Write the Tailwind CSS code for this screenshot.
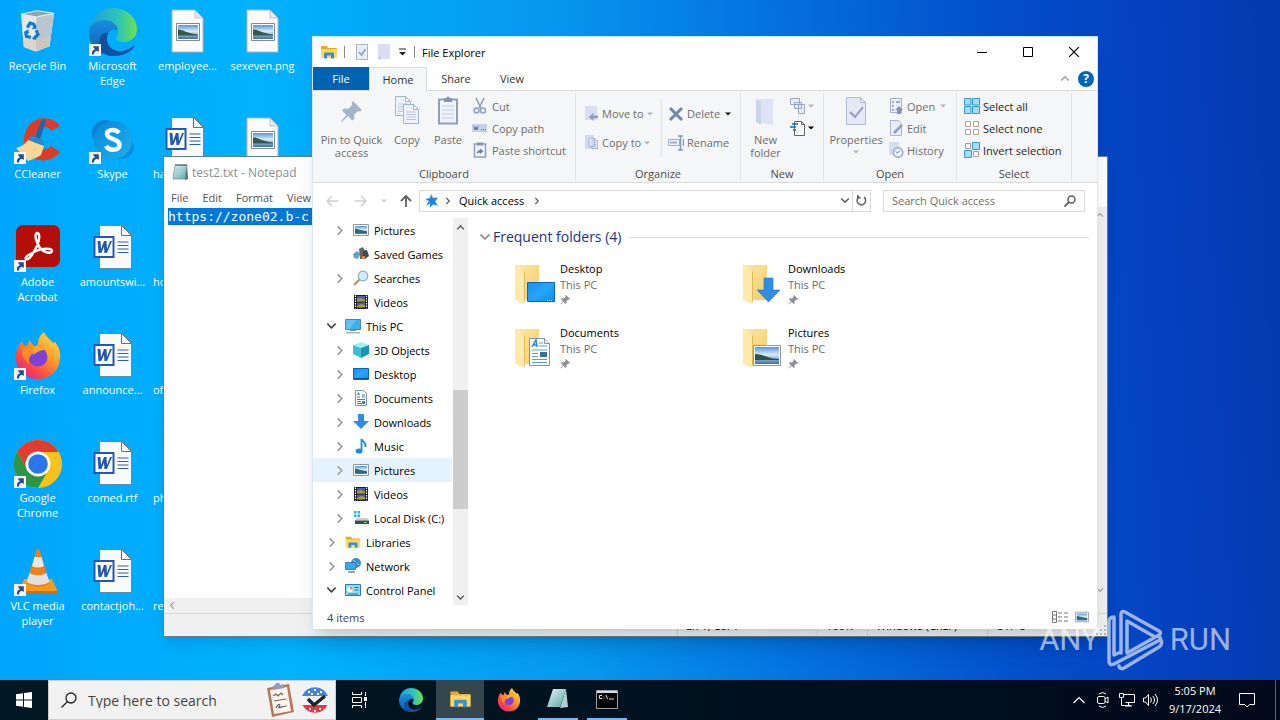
<!DOCTYPE html>
<html lang="en">
<head>
  <meta charset="UTF-8" />
  <meta name="viewport" content="width=device-width, initial-scale=1.0"/>
  <title>Desktop</title>
  <script src="https://cdn.jsdelivr.net/npm/@tailwindcss/browser@4"></script>
</head>
<body class="h-screen overflow-hidden flex flex-col font-['Open_Sans','Noto_Sans',sans-serif] text-[11px] leading-[15px] text-black">

  <!-- Shared icons -->
  <svg class="absolute size-0" aria-hidden="true">
    <defs>
      <linearGradient id="gSky" x1="0" y1="0" x2="0" y2="1"><stop offset="0" stop-color="#5b93dd"/><stop offset=".45" stop-color="#d8ecf8"/><stop offset=".75" stop-color="#7fa9cc"/><stop offset="1" stop-color="#3f6f9c"/></linearGradient>
      <linearGradient id="gFolder" x1="0" y1="0" x2="1" y2="1"><stop offset="0" stop-color="#ffe9a6"/><stop offset="1" stop-color="#f3cb62"/></linearGradient>
      <linearGradient id="gScreen" x1="0" y1="0" x2="1" y2="1"><stop offset="0" stop-color="#1a8fee"/><stop offset=".5" stop-color="#25a5fb"/><stop offset="1" stop-color="#0f8cf0"/></linearGradient>
      <linearGradient id="gEdgeA" x1="0" y1="0" x2="1" y2="0"><stop offset="0" stop-color="#1f9fe0"/><stop offset=".6" stop-color="#2fc4b8"/><stop offset="1" stop-color="#6fe04c"/></linearGradient>
      <linearGradient id="gEdgeB" x1="0" y1="0" x2="0" y2="1"><stop offset="0" stop-color="#1690dc"/><stop offset="1" stop-color="#1058b0"/></linearGradient>
      <linearGradient id="gFox" x1="1" y1="0" x2="0.2" y2="1"><stop offset="0" stop-color="#fff04a"/><stop offset=".45" stop-color="#ff9a2a"/><stop offset=".75" stop-color="#ff4a44"/><stop offset="1" stop-color="#e0218f"/></linearGradient>
      <linearGradient id="gSkype" x1="0" y1="0" x2="1" y2="1"><stop offset="0" stop-color="#0a86d8"/><stop offset="1" stop-color="#1cb2ee"/></linearGradient>
      <linearGradient id="gPad" x1="0" y1="0" x2="1" y2="1"><stop offset="0" stop-color="#e4f5f5"/><stop offset="1" stop-color="#5aa5a8"/></linearGradient>

      <symbol id="shortcut" viewBox="0 0 12 12"><path d="M0 0h12v12H0z" fill="#f4f6fa"/><path d="M3 10.500c-.3-3 .7-4.600 3-5.200L4.200 3.300V2.300H9.800V8L8 6.800C6 7.200 5 8.300 5 10.500z" fill="#2b4a86"/></symbol>
      <symbol id="bin" viewBox="-2 -1 54 54">
        <path d="M6 6l18-4 19 3-5 37-16 6-13-5z" fill="#cdd6dd"/>
        <path d="M6 6l17 3 20-4-5 37-15 6-14-5z" fill="#e9eef2" opacity=".8"/>
        <path d="M23 9l20-4-5 37-15 6z" fill="#b3bfc8" opacity=".85"/>
        <path d="M9 33l14 2 16-4-1 11-15 6-14-5z" fill="#d8c6b8" opacity=".6"/>
        <path d="M6 6l18-4 19 3-20 4z" fill="#8fa3b0" stroke="#f2f6f8"/>
        <path d="M13 21l3-5 4 1 2 4M23 24l2 5-4 4M17 32l-5-1-1-5" fill="none" stroke="#1976cf" stroke-width="3.600"/>
        <path d="M21 18l3 4-6 1zM22 29l-4 5 5 1zM9 26l5-3 1 5z" fill="#1976cf"/>
      </symbol>
      <symbol id="edge" viewBox="0 0 48 48">
        <path d="M1 22C2 9 12 0 24 0c13 0 24 9 24 21 0 8-6 13-13 13-5 0-8-2-8-4 0-1 2-2 2-6 0-6-6-11-13-11C9 13 3 17 1 22z" fill="url(#gEdgeA)"/>
        <path d="M0 25c0-8 7-13 15-13 7 0 13 4 14 10-5-2-11 1-11 9 0 9 8 15 14 16-17 4-32-7-32-22z" fill="url(#gEdgeB)"/>
        <path d="M19 25c-4 10 3 18 12 18 6 0 11-3 13-5 1-1 2 0 1 1-4 6-12 9-21 9-8 0-14-6-14-14 0-5 4-10 9-9z" fill="#124f9e"/>
      </symbol>
      <symbol id="png" viewBox="0 -1 34 48">
        <path d="M1 1h23l8 8v34H1z" fill="#fbfbfb" stroke="#b5b5b5"/><path d="M24 1v8h8z" fill="#e6eaee" stroke="#a9b2b8" stroke-width=".7"/>
        <path d="M5.500 14.500h23v17h-23z" fill="#fff" stroke="#7d8a97"/><path d="M7 16h20v14H7z" fill="url(#gSky)"/><path d="M7 20.500c5 0 9 4 20 5v1H7z" fill="#34584a"/>
      </symbol>
      <symbol id="word" viewBox="0 -1 39 48">
        <path d="M6 .5h22l10 10v33H6z" fill="#fafafa" stroke="#4e7a96" stroke-width=".8"/><path d="M28 .5v10h10z" fill="#fff" stroke="#8c6a45"/>
        <path d="M24 17h11M24 20.500h11M24 24h11M24 27.500h11" stroke="#2a5eb4" stroke-width="1.200"/>
        <path d="M0 11h21v22H0z" fill="#2458b0"/><path d="M2 13h17v18H2z" fill="#fff"/>
        <path d="M4 16h3l.5 8 3-8h2.500l.5 8 3-8h2l-5 12h-2.500l-.6-6-2.600 6H5z" fill="#2458b0"/>
      </symbol>
      <symbol id="ccleaner" viewBox="0 0 48 48">
        <path d="M46 10C40 1 25-1 16 8 7 18 8 36 19 42c9 5 21 2 27-6l-9-6c-5 5-13 4-15-2-3-7 1-16 8-17 3 0 6 1 7 4z" fill="#dd3b26"/>
        <path d="M28 3l4 2-6 18-5-2z" fill="#2365a4"/><path d="M17 19l12 5 1 6-16-4z" fill="#2d86cc"/>
        <path d="M14 24l16 6-3 9c-3 2-7 4-13 6L2 32c5-1 9-4 12-8z" fill="#f7d797"/>
      </symbol>
      <symbol id="skype" viewBox="0 0 48 48">
        <circle cx="16" cy="17" r="13" fill="#0a82d2"/><circle cx="33" cy="31" r="12" fill="#0c8ee0"/><circle cx="24" cy="24" r="19" fill="url(#gSkype)"/>
        <path d="M30 17c-3-4-12-4-12 1 0 6 12.500 4 12.500 11 0 6-10.500 6-13.500 1" fill="none" stroke="#fff" stroke-width="4.500"/>
      </symbol>
      <symbol id="adobe" viewBox="0 0 48 48">
        <rect x="2" y="1" width="44" height="42" rx="7" fill="#b40f06"/>
        <path d="M23 9c-3 1-1 9 3 15 4 5 11 6 12 3 0-3-10-3-16 0s-12 6-10 8c3 2 8-7 11-13 3-7 3-13 0-13z" fill="none" stroke="#fff" stroke-width="2.400"/>
      </symbol>
      <symbol id="firefox" viewBox="0 0 48 48">
        <path d="M2 28C1 20 4 14 8 9l2 5 4-1 1-5 5 6c2 0 3 0 4-2 0-5 2-9 6-12 2 5 6 7 9 11l2-1c4 5 6 11 5 17-1 12-10 20-22 20S3 39 2 28z" fill="url(#gFox)"/>
        <circle cx="24" cy="25" r="9.500" fill="#7c42d8"/>
        <path d="M8 16c5-2 11-1 16 2l-6 4c-3 3-4 6-3 10-6-5-8-10-7-16z" fill="#ff8a26"/><path d="M20 14c4 0 8 1 11 4-4 0-9 2-12 5z" fill="#ffa82e"/>
      </symbol>
      <symbol id="chrome" viewBox="0 0 48 48">
        <circle cx="24" cy="24" r="24" fill="#f9c21a"/>
        <path d="M3.200 12a24 24 0 0 0 20.800 36L34.400 30 24 24 13.600 30z" fill="#2a9644"/>
        <path d="M3.200 12A24 24 0 0 1 44.800 12H24L13.600 30z" fill="#e33b2e"/>
        <circle cx="24" cy="24" r="12.500" fill="#fff"/><circle cx="24" cy="24" r="9.800" fill="#2a74ee"/>
      </symbol>
      <symbol id="vlc" viewBox="0 0 48 48">
        <path d="M10 31h28l6 13H4z" fill="#f59a1c"/><path d="M4 43h40v2H4z" fill="#d86c08"/>
        <path d="M22.500 2q1.500-2 3 0l10 33c-4 5-19 5-23 0z" fill="#f0801a"/><path d="M20.500 9h7l2.500 9c-4 2-8 2-12 0z" fill="#e8e8e8"/><path d="M15.500 25c5 3 12 3 17 0l3 9c-6 4-17 4-23 0z" fill="#e0e0e0"/>
      </symbol>
      <symbol id="notepad" viewBox="0 0 16 18"><path d="M3 2h12l-2 14H1z" fill="url(#gPad)" stroke="#6b8a8c" stroke-width=".7"/><path d="M15 2l1 14-3 1z" fill="#4f7376"/><path d="M4 1v2M6 1v2M8 1v2M10 1v2M12 1v2M14 1v2" stroke="#4a5658"/><path d="M4 6h8M3.600 8.500h8M3.300 11h8" stroke="#a9cfd1" stroke-width=".8"/></symbol>
      <symbol id="explorer" viewBox="0 0 18 16"><path d="M1 2h6l1 2h9v10H1z" fill="#e9a825"/><path d="M1 5h16v9H1z" fill="#fbd766"/><path d="M4 14.500V9.500q0-1 1-1h8q1 0 1 1v5h-3v-3H7v3z" fill="#3b8fce"/></symbol>

      <symbol id="chevR" viewBox="0 0 8 12"><path d="M1.500 1.500L6 6l-4.500 4.500" fill="none" stroke="currentColor" stroke-width="1.600"/></symbol>
      <symbol id="chevD" viewBox="0 0 12 8"><path d="M1.500 1.500L6 6l4.500-4.500" fill="none" stroke="currentColor" stroke-width="1.800"/></symbol>
      <symbol id="chevU" viewBox="0 0 12 8"><path d="M1.500 6.500L6 2l4.500 4.500" fill="none" stroke="currentColor" stroke-width="1.800"/></symbol>
      <symbol id="drop" viewBox="0 0 6 4"><path d="M0 .5h6L3 3.500z" fill="currentColor"/></symbol>

      <symbol id="iPictures" viewBox="0 0 16 16"><path d="M.5 2.500h15v11H.5z" fill="#fff" stroke="#8f9aa5"/><path d="M2 4h12v8H2z" fill="url(#gSky)"/><path d="M2 6.500c4 1 7 2 12 3V11H2z" fill="#2f6678"/></symbol>
      <symbol id="iGames" viewBox="0 0 16 16"><path d="M0 8l4-3 3 3-2 5-4-1z" fill="#5ba6c8"/><path d="M6 3l4-2 2 4-1 8H7z" fill="#5d676d"/><path d="M10 5l4-1 2 6-4 3-2-1z" fill="#454b50"/><path d="M9 10h3v3H9z" fill="#d98b4a"/></symbol>
      <symbol id="iSearch" viewBox="0 0 16 16"><path d="M1 15l6-6" stroke="#a88d6d" stroke-width="2"/><circle cx="10" cy="6" r="4.800" fill="#d3ebfa" stroke="#8ba9c0" stroke-width="1.200"/></symbol>
      <symbol id="iVideos" viewBox="0 0 16 16"><path d="M1 1h14v14H1z" fill="#1c1c24"/><path d="M4 2h8v5.500H4z" fill="#4c5fa8"/><path d="M4 8.500h8V14H4z" fill="#4c5fa8"/><path d="M4 5l4-1 4 2v1.500H4zM4 12l4-2 4 1v2H4z" fill="#a89a3c"/><path d="M2.500 1.500v13M13.500 1.500v13" stroke="#fff" stroke-width="1.200" stroke-dasharray="1.500 1"/></symbol>
      <symbol id="iPC" viewBox="0 0 16 16"><path d="M.5 1.500h15v10H.5z" fill="#39b2f0" stroke="#4b86ae"/><path d="M1 2h10L5 11H1z" fill="#77d0fa" opacity=".6"/><path d="M5 12.500h6M1 14.800h14" stroke="#7d8f9c"/></symbol>
      <symbol id="i3D" viewBox="0 0 16 16"><path d="M0 3l8-3 8 3-8 3z" fill="#a6ecf4"/><path d="M0 3l8 3v10l-8-4z" fill="#3cc0d6"/><path d="M16 3L8 6v10l8-4z" fill="#1793b5"/></symbol>
      <symbol id="iDesktop" viewBox="0 0 16 16"><path d="M.5 2.500h15v11H.5z" fill="url(#gScreen)" stroke="#0b62b0"/><path d="M1 12.500h14" stroke="#0d4f96"/></symbol>
      <symbol id="iDocs" viewBox="0 0 16 16"><path d="M2.500.5h8l3 3v12h-11z" fill="#fff" stroke="#7d96a8"/><path d="M4 7h3M9 5h3M9 7h3M4 9.500h8M4 11.500h4M4 13.500h8" stroke="#3b82c4"/><path d="M4 5l1.500-3L7 5M9 11h3v2H9z" fill="#3b82c4"/></symbol>
      <symbol id="iDown" viewBox="0 0 16 16"><path d="M5 0h6v7h5l-8 8-8-8h5z" fill="#2f8ce2"/></symbol>
      <symbol id="iMusic" viewBox="0 0 16 16"><path d="M8.500 13V1c1 3 5 3.500 4 8" fill="none" stroke="#1b8de8" stroke-width="1.800"/><ellipse cx="6" cy="13" rx="3.400" ry="2.600" fill="#1b8de8"/></symbol>
      <symbol id="iDisk" viewBox="0 0 16 16"><path d="M1 1h2.500v2.500H1zM4.500 1H7v2.500H4.500zM1 4.500h2.500V7H1zM4.500 4.500H7V7H4.500z" fill="#21b4e4"/><path d="M4 8h10l2 2.500H2z" fill="#c9cdd0"/><path d="M2 10.500h14V14H2z" fill="#43484c"/><path d="M11 12.500h3" stroke="#6de06a"/></symbol>
      <symbol id="iNetwork" viewBox="0 0 16 16"><circle cx="11" cy="5" r="5" fill="#3d8fc8"/><path d="M8 2l6 5" stroke="#a5d4f0"/><path d="M.5 4.500h11l-1 7H.5z" fill="#35aaf0" stroke="#2c6c9c" stroke-width=".8"/><path d="M3 14h7" stroke="#6c7f8c" stroke-width="1.400"/></symbol>
      <symbol id="iPanel" viewBox="0 0 16 16"><path d="M.5 2.500h15v11H.5z" fill="#8fdcfa" stroke="#2b7ab2"/><circle cx="5" cy="7.500" r="2.800" fill="#fff"/><path d="M5 7.500V4.700A2.800 2.800 0 0 1 7.800 7.500z" fill="#e5902c"/><path d="M9.500 5.500h4M9.500 8h4M3 12h10" stroke="#256ea8" stroke-width="1.200"/></symbol>

      <symbol id="folderBase" viewBox="0 0 42 42"><path d="M2 2h24v35H13z" fill="url(#gFolder)"/><path d="M2 2l9 6v33l-9-4z" fill="#ffe9ad"/><path d="M11 8v33l1-4V9z" fill="#e3b85a"/></symbol>
      <symbol id="pin" viewBox="0 0 12 12"><path d="M6.500 1l4.500 4.500-1 .8-1-.3-2 2 .2 2-1.200.8L4 8.500.8 11.500l-.4-.3L3.200 8 1 5.800 2 4.700l2.200.2 2-2L5.800 2z" fill="currentColor"/></symbol>
      <symbol id="page" viewBox="0 0 16 20"><path d="M.5.5h10l5 5v14H.5z" fill="#eef2fa" stroke="#a3b4cf"/><path d="M10.500.5v5h5" fill="none" stroke="#a3b4cf"/><path d="M3 8h10M3 10.500h10M3 13h10M3 15.500h10" stroke="#b9c8e0"/></symbol>
    </defs>
  </svg>

  <!-- Desktop -->
  <main class="relative flex-1 min-h-0 overflow-hidden bg-[linear-gradient(87deg,#00a6fc_0%,#00b2ff_22%,#0698f0_44%,#0474e0_60%,#034fcc_78%,#0443c2_88%,#0438ae_100%)]">

    <div class="grid grid-flow-col grid-rows-[repeat(6,108px)] auto-cols-[75px] w-max text-white text-center [text-shadow:0_1px_1px_#0060a0]">
      <button class="flex flex-col items-center justify-start pt-2 gap-[2px]"><svg class="size-12"><use href="#bin"/></svg>Recycle Bin</button>
      <button class="flex flex-col items-center justify-start pt-2 gap-[2px]"><span class="relative"><svg class="size-12"><use href="#ccleaner"/></svg><svg class="absolute left-0 bottom-0 size-3"><use href="#shortcut"/></svg></span>CCleaner</button>
      <button class="flex flex-col items-center justify-start pt-2 gap-[2px]"><span class="relative"><svg class="size-12"><use href="#adobe"/></svg><svg class="absolute left-0 bottom-0 size-3"><use href="#shortcut"/></svg></span>Adobe<br>Acrobat</button>
      <button class="flex flex-col items-center justify-start pt-2 gap-[2px]"><span class="relative"><svg class="size-12"><use href="#firefox"/></svg><svg class="absolute left-0 bottom-0 size-3"><use href="#shortcut"/></svg></span>Firefox</button>
      <button class="flex flex-col items-center justify-start pt-2 gap-[2px]"><span class="relative"><svg class="size-12"><use href="#chrome"/></svg><svg class="absolute left-0 bottom-0 size-3"><use href="#shortcut"/></svg></span>Google<br>Chrome</button>
      <button class="flex flex-col items-center justify-start pt-2 gap-[2px]"><span class="relative"><svg class="size-12"><use href="#vlc"/></svg><svg class="absolute left-0 bottom-0 size-3"><use href="#shortcut"/></svg></span>VLC media<br>player</button>

      <button class="flex flex-col items-center justify-start pt-2 gap-[2px]"><span class="relative"><svg class="size-12"><use href="#edge"/></svg><svg class="absolute left-0 bottom-0 size-3"><use href="#shortcut"/></svg></span>Microsoft<br>Edge</button>
      <button class="flex flex-col items-center justify-start pt-2 gap-[2px]"><span class="relative"><svg class="size-12"><use href="#skype"/></svg><svg class="absolute left-0 bottom-0 size-3"><use href="#shortcut"/></svg></span>Skype</button>
      <button class="flex flex-col items-center justify-start pt-2 gap-[2px]"><svg class="h-12 w-[44px]"><use href="#word"/></svg>amountswi...</button>
      <button class="flex flex-col items-center justify-start pt-2 gap-[2px]"><svg class="h-12 w-[44px]"><use href="#word"/></svg>announce...</button>
      <button class="flex flex-col items-center justify-start pt-2 gap-[2px]"><svg class="h-12 w-[44px]"><use href="#word"/></svg>comed.rtf</button>
      <button class="flex flex-col items-center justify-start pt-2 gap-[2px]"><svg class="h-12 w-[44px]"><use href="#word"/></svg>contactjoh...</button>

      <button class="flex flex-col items-center justify-start pt-2 gap-[2px]"><svg class="h-12 w-[34px]"><use href="#png"/></svg>employee...</button>
      <button class="flex flex-col items-start pt-2 pl-[3px] gap-[2px]"><svg class="h-12 w-[64px]"><use href="#word"/></svg>ha</button>
      <button class="flex flex-col items-start pt-2 pl-[3px] gap-[2px]"><svg class="h-12 w-[64px]"><use href="#word"/></svg>ho</button>
      <button class="flex flex-col items-start pt-2 pl-[3px] gap-[2px]"><svg class="h-12 w-[64px]"><use href="#word"/></svg>of</button>
      <button class="flex flex-col items-start pt-2 pl-[3px] gap-[2px]"><svg class="h-12 w-[64px]"><use href="#word"/></svg>ph</button>
      <button class="flex flex-col items-start pt-2 pl-[3px] gap-[2px]"><svg class="h-12 w-[64px]"><use href="#word"/></svg>re</button>

      <button class="flex flex-col items-center justify-start pt-2 gap-[2px]"><svg class="h-12 w-[34px]"><use href="#png"/></svg>sexeven.png</button>
      <button class="flex flex-col items-center justify-start pt-2 gap-[2px]" aria-label="Image"><svg class="h-12 w-[34px]"><use href="#png"/></svg></button>
    </div>

    <!-- Notepad -->
    <section class="absolute left-[163px] right-[172px] top-[156px] bottom-[43px] flex flex-col bg-white border border-[#5f7f95] shadow-lg">
      <header class="h-[30px] shrink-0 flex items-center gap-1 pl-2 text-[12px] text-[#8f8f8f]">
        <svg class="w-4 h-[18px]"><use href="#notepad"/></svg>
        <span>test2.txt - Notepad</span>
      </header>
      <nav class="h-5 shrink-0 flex items-center gap-[14px] pl-[7px] text-[#555]">
        <button>File</button><button>Edit</button><button>Format</button><button>View</button>
      </nav>
      <div class="flex-1 min-h-0 flex">
        <div class="flex-1 pl-1">
          <p class="mt-px h-[17px] bg-[#0078d7] text-white font-['DejaVu_Sans_Mono','Liberation_Mono',monospace] text-[13px] leading-[17px] overflow-hidden">https://zone02.b-c</p>
        </div>
        <div class="w-[15px] bg-[#f0f0f0] flex flex-col justify-between items-center py-1 text-[#a0a0a0]">
          <svg class="w-2 h-2"><use href="#chevU"/></svg><svg class="w-2 h-2"><use href="#chevD"/></svg>
        </div>
      </div>
      <div class="h-4 shrink-0 bg-[#f0f0f0] border-b border-[#d7d7d7] flex items-center pl-1 text-[#a0a0a0]"><svg class="w-2 h-[9px] rotate-180"><use href="#chevR"/></svg></div>
      <footer class="h-[22px] shrink-0 bg-[#f0f0f0] flex justify-end items-stretch leading-[23px]">
        <span class="w-[140px] border-l border-[#d7d7d7] pl-2">Ln 1, Col 1</span>
        <span class="w-[50px] border-l border-[#d7d7d7] pl-2">100%</span>
        <span class="w-[120px] border-l border-[#d7d7d7] pl-2">Windows (CRLF)</span>
        <span class="w-[120px] border-l border-[#d7d7d7] pl-2 flex justify-between">UTF-8
          <svg class="size-3 self-end" viewBox="0 0 12 12"><path d="M9 1h2v2H9zM5 5h2v2H5zM9 5h2v2H9zM1 9h2v2H1zM5 9h2v2H5zM9 9h2v2H9z" fill="#b8b8b8"/></svg>
        </span>
      </footer>
    </section>

    <!-- File Explorer -->
    <section class="absolute left-[312px] right-[182px] top-[36px] bottom-[51px] flex flex-col bg-white border-x border-t border-x-[#d5e8f5] border-t-[#c4eefa] shadow-xl">
      <header class="h-[30px] shrink-0 flex items-center pl-[7px]">
        <svg class="w-[18px] h-4"><use href="#explorer"/></svg>
        <span class="w-px h-3 bg-[#8b8b8b] ml-[6px]"></span>
        <button class="ml-[11px]" aria-label="Properties"><svg class="w-3 h-4" viewBox="0 0 12 16"><path d="M.5.5h11v15H.5z" fill="#e8eef8" stroke="#a9b7d0"/><path d="M3 8l2.500 3L9.500 5" fill="none" stroke="#8b9cc0" stroke-width="1.500"/></svg></button>
        <button class="ml-[10px]" aria-label="New folder"><svg class="w-3 h-4" viewBox="0 0 12 16"><path d="M0 0h12v15H0z" fill="#dcdff3"/><path d="M0 12l3 1v3l-3-1z" fill="#c5cbea"/></svg></button>
        <button class="ml-[9px]" aria-label="Customize toolbar"><svg class="w-[7px] h-2" viewBox="0 0 7 8"><path d="M0 1h7" stroke="#222"/><path d="M0 4h7L3.500 7.500z" fill="#222"/></svg></button>
        <span class="w-px h-3 bg-[#8b8b8b] ml-[8px] mr-[7px]"></span>
        <h1>File Explorer</h1>
        <div class="ml-auto flex">
          <button class="w-[46px] h-[30px] grid place-items-center" aria-label="Minimize"><svg class="size-[10px]" viewBox="0 0 10 10"><path d="M0 5.500h10" stroke="#000"/></svg></button>
          <button class="w-[46px] h-[30px] grid place-items-center" aria-label="Maximize"><svg class="size-[10px]" viewBox="0 0 10 10"><path d="M.5.5h9v9h-9z" fill="none" stroke="#000"/></svg></button>
          <button class="w-[46px] h-[30px] grid place-items-center" aria-label="Close"><svg class="size-[10px]" viewBox="0 0 10 10"><path d="M0 0l10 10M10 0L0 10" stroke="#000" stroke-width="1.200"/></svg></button>
        </div>
      </header>

      <nav class="h-6 shrink-0 flex text-[#333] border-b border-[#dadbdc]">
        <button class="w-14 bg-[#0063b1] text-white">File</button>
        <button class="w-[58px] h-6 bg-[#f5f6f7] border-x border-t border-[#dadbdc]">Home</button>
        <button class="w-[58px]">Share</button>
        <button class="w-[54px]">View</button>
        <div class="ml-auto flex items-center gap-2 pr-[3px]">
          <button class="text-[#a0a0a0]" aria-label="Collapse ribbon"><svg class="w-[10px] h-[7px]"><use href="#chevU"/></svg></button>
          <button class="size-4 rounded-full bg-[#0067b8] text-white font-bold text-[12px] leading-4" aria-label="Help">?</button>
        </div>
      </nav>

      <!-- Ribbon -->
      <div class="h-[92px] shrink-0 flex bg-[#f5f6f7] border-b border-[#dadbdc] text-[#6d6d6d] leading-[13px]">
        <div class="w-[263px] my-[2px] border-r border-[#e2e3e4] flex flex-col">
          <div class="flex-1 min-h-0 flex items-start pt-[2px]">
            <button class="w-[77px] flex flex-col items-center"><svg class="size-8 p-1 text-[#a4b5c8]"><use href="#pin"/></svg><span class="mt-[6px]">Pin to Quick<br>access</span></button>
            <button class="w-[34px] flex flex-col items-center"><svg class="size-8" viewBox="0 0 32 32"><use href="#page" x="4" y="1" width="16" height="20"/><use href="#page" x="12" y="9" width="16" height="20"/></svg><span class="mt-[6px]">Copy</span></button>
            <button class="w-[48px] flex flex-col items-center"><svg class="size-8" viewBox="0 0 32 32"><path d="M7 4.500h18v24H7z" fill="#f0f4fb" stroke="#8e9fc0" stroke-width="2"/><path d="M12 3h2q2-3 4 0h2v4h-8z" fill="#8795ae"/><path d="M10 11h12M10 15h12M10 19h12M10 23h12" stroke="#bccae0"/></svg><span class="mt-[6px]">Paste</span></button>
            <div class="flex flex-col">
              <button class="h-[22px] flex items-center gap-1"><svg class="size-4" viewBox="0 0 16 16"><path d="M4 0l5 10M12 0L7 10" stroke="#8b9cb5" stroke-width="1.500"/><circle cx="4.500" cy="12.500" r="2.500" fill="none" stroke="#8fa2cc" stroke-width="1.500"/><circle cx="11" cy="12.500" r="2.500" fill="none" stroke="#8fa2cc" stroke-width="1.500"/></svg>Cut</button>
              <button class="h-[22px] flex items-center gap-1"><svg class="size-4" viewBox="0 0 16 16"><path d="M0 4h15v8H0z" fill="#c6d0ea"/><path d="M2 6l1 4 1-3 1 3 1-4M9 9.500h1M11 9.500h1M13 9.500h1" fill="none" stroke="#5c74a8"/></svg>Copy path</button>
              <button class="h-[22px] flex items-center gap-1"><svg class="size-4" viewBox="0 0 16 16"><path d="M2.500 2h11v13h-11z" fill="#f0f4fb" stroke="#8e9fc0" stroke-width="1.500"/><path d="M5 .5h6v3H5z" fill="#8795ae"/><path d="M5 12c0-3 1-4 3-4V6.500l3.500 2.800L8 12v-1.500c-1 0-2 .5-3 1.500z" fill="#6c80aa"/></svg>Paste shortcut</button>
            </div>
          </div>
          <p class="text-center text-[#4a4a4a]">Clipboard</p>
        </div>

        <div class="w-[165px] my-[2px] border-r border-[#e2e3e4] flex flex-col">
          <div class="flex-1 min-h-0 flex items-start pt-[6px] pl-2">
            <div class="h-[58px] w-[78px] border-r border-[#e2e3e4] flex flex-col">
              <button class="h-[29px] flex items-center gap-[3px]"><svg class="size-[15px]" viewBox="0 0 16 16"><path d="M1 0h13v15H1z" fill="#d8dff1"/><path d="M15 10h-5V7l-5 5 5 4v-3h5z" fill="#8f9fc0"/></svg>Move to<svg class="w-[6px] h-1 text-[#b3b3b3]"><use href="#drop"/></svg></button>
              <button class="h-[29px] flex items-center gap-[3px]"><svg class="size-[15px]" viewBox="0 0 16 16"><path d="M1 0h10v15H1z" fill="#cfdcf0"/><path d="M5.500 3.500h6v9h-6zM8.500 5.500h6v9h-6z" fill="#f4f7fc" stroke="#98abcf"/><path d="M10 8h3M10 10h3M10 12h3" stroke="#98abcf"/></svg>Copy to<svg class="w-[6px] h-1 text-[#b3b3b3]"><use href="#drop"/></svg></button>
            </div>
            <div class="flex flex-col pl-[6px]">
              <button class="h-[29px] flex items-center gap-[3px]"><svg class="size-4" viewBox="0 0 16 16"><path d="M2 2l12 12M14 2L2 14" stroke="#7287a5" stroke-width="3"/></svg>Delete<svg class="w-[6px] h-1 ml-[2px] text-black"><use href="#drop"/></svg></button>
              <button class="h-[29px] flex items-center gap-[3px]"><svg class="size-4" viewBox="0 0 16 16"><path d="M.5 4.500h11v6H.5z" fill="#eef2fa" stroke="#9aaed0"/><path d="M2 6.500h7v2H2z" fill="#9aaed0"/><path d="M10 1h5M12.500 1v14M10 15h5M15.500 4v7" stroke="#8398bd" stroke-width="1.500"/></svg>Rename</button>
            </div>
          </div>
          <p class="text-center text-[#4a4a4a]">Organize</p>
        </div>

        <div class="w-[83px] my-[2px] border-r border-[#e2e3e4] flex flex-col">
          <div class="flex-1 min-h-0 flex items-start pt-[2px]">
            <button class="w-[49px] flex flex-col items-center"><svg class="size-8" viewBox="0 0 32 32"><path d="M6 4h17v26l-13-2z" fill="#dce3f3"/><path d="M6 4l5 4v22l-5-3z" fill="#c9d3ec"/></svg><span class="mt-[6px]">New<br>folder</span></button>
            <div class="flex flex-col">
              <button class="h-[22px] flex items-center gap-[2px]" aria-label="New item"><svg class="size-4" viewBox="0 0 16 16"><path d="M.5.5h9v6h-9zM4.500 4.500h7v6h-7zM8.500 6.500h6v9h-6z" fill="#e8edf7" stroke="#95a6c6"/></svg><svg class="w-[6px] h-1 text-[#b3b3b3]"><use href="#drop"/></svg></button>
              <button class="h-[22px] flex items-center gap-[2px]" aria-label="Easy access"><svg class="size-4" viewBox="0 0 16 16"><path d="M4.500 1.500h7l3 3v11h-10z" fill="#fff" stroke="#666"/><path d="M11.500 1.500v3h3" fill="none" stroke="#666"/><path d="M2 4h6M0 7h6M3 10h3" stroke="#1767b5" stroke-width="1.500"/></svg><svg class="w-[6px] h-1 text-black"><use href="#drop"/></svg></button>
            </div>
          </div>
          <p class="text-center text-[#4a4a4a]">New</p>
        </div>

        <div class="w-[133px] my-[2px] border-r border-[#e2e3e4] flex flex-col">
          <div class="flex-1 min-h-0 flex items-start pt-[2px]">
            <button class="w-[64px] flex flex-col items-center"><svg class="size-8" viewBox="0 0 32 32"><path d="M6.500 2.500h14l5 5v22h-19z" fill="#e4e9f6" stroke="#b0bcd6"/><path d="M20.500 2.500v5h5" fill="none" stroke="#b0bcd6"/><path d="M10 17l5 5 8-10" fill="none" stroke="#8d9ec2" stroke-width="2"/></svg><span class="mt-[6px]">Properties</span><svg class="w-[6px] h-1 mt-1 text-[#b3b3b3]"><use href="#drop"/></svg></button>
            <div class="flex flex-col">
              <button class="h-[22px] flex items-center gap-[3px]"><svg class="size-4" viewBox="0 0 16 16"><path d="M2.500.5h11v14h-11z" fill="#eef2fa" stroke="#a0aecb"/><path d="M4 3h2v2H4zM4 7h2v2H4zM4 11h2v2H4zM8 3h4v2H8z" fill="#9aaad0"/><path d="M9 16v-4H7l4-4 4 4h-2v4z" fill="#8094bc"/></svg>Open<svg class="w-[6px] h-1 ml-[2px] text-[#b3b3b3]"><use href="#drop"/></svg></button>
              <button class="h-[22px] flex items-center gap-[3px]"><svg class="size-4" viewBox="0 0 16 16"><path d="M2.500.5h8l3 3v12h-11z" fill="#e8edf8" stroke="#a8b5d0"/><path d="M6 13l8-8" stroke="#8ea0c4" stroke-width="2.500"/></svg>Edit</button>
              <button class="h-[22px] flex items-center gap-[3px]"><svg class="size-4" viewBox="0 0 16 16"><path d="M1 0h10v13H1z" fill="#d5def0"/><circle cx="10" cy="10.500" r="4.700" fill="#eef2fa" stroke="#93a5c8" stroke-width="1.500"/><path d="M7.500 9.500l2 1.500L12 8.500" fill="none" stroke="#6c80aa"/></svg>History</button>
            </div>
          </div>
          <p class="text-center text-[#4a4a4a]">Open</p>
        </div>

        <div class="w-[115px] my-[2px] border-r border-[#e2e3e4] flex flex-col">
          <div class="flex-1 min-h-0 flex flex-col pt-[2px] pl-[7px] text-[#1e1e1e]">
            <button class="h-[22px] flex items-center gap-[3px]"><svg class="size-4" viewBox="0 0 16 16"><path d="M.5.5h6.500v6.500H.5zM8.500.5h7v6.500h-7zM.5 8.500h6.500v7H.5zM8.500 8.500h7v7h-7z" fill="#a5dcfb" stroke="#3596d6"/></svg>Select all</button>
            <button class="h-[22px] flex items-center gap-[3px]"><svg class="size-4" viewBox="0 0 16 16"><path d="M1.500 1.500h5v5h-5zM9.500 1.500h5v5h-5zM1.500 9.500h5v5h-5zM9.500 9.500h5v5h-5z" fill="#fff" stroke="#b49f94"/></svg>Select none</button>
            <button class="h-[22px] flex items-center gap-[3px]"><svg class="size-4" viewBox="0 0 16 16"><path d="M1.500 1.500h5v5h-5zM9.500 9.500h5v5h-5z" fill="#fff" stroke="#a79a94"/><path d="M8.500.5h7v7h-7zM.5 8.500h7v7h-7z" fill="#a5dcfb" stroke="#3596d6"/></svg>Invert selection</button>
          </div>
          <p class="text-center text-[#4a4a4a]">Select</p>
        </div>
      </div>

      <!-- Address bar -->
      <div class="h-[35px] shrink-0 flex items-center pr-3">
        <div class="w-[106px] flex items-center pl-[13px]">
          <button aria-label="Back"><svg class="size-3" viewBox="0 0 12 12"><path d="M12 6H1M6 1L1 6l5 5" fill="none" stroke="#d0d0d0" stroke-width="1.500"/></svg></button>
          <button class="ml-[17px]" aria-label="Forward"><svg class="size-3" viewBox="0 0 12 12"><path d="M0 6h11M6 1l5 5-5 5" fill="none" stroke="#d0d0d0" stroke-width="1.500"/></svg></button>
          <button class="ml-[14px] text-[#d0d0d0]" aria-label="Recent"><svg class="w-[6px] h-1"><use href="#drop"/></svg></button>
          <button class="ml-[13px]" aria-label="Up"><svg class="size-3" viewBox="0 0 12 12"><path d="M6 12V1M1 6l5-5 5 5" fill="none" stroke="#606060" stroke-width="1.800"/></svg></button>
        </div>
        <div class="flex-1 h-[22px] flex items-center border border-[#d9d9d9] pl-[5px]">
          <svg class="size-[14px]" viewBox="0 0 14 14"><path d="M6 0l2 4 5-.5-3 4 3 4-5-1-3 3v-4L1 12l3-5-4-2 5-1z" fill="#1f87dd"/></svg>
          <svg class="w-[6px] h-2 ml-[6px] text-[#555]"><use href="#chevR"/></svg>
          <a href="#" class="ml-2">Quick access</a>
          <svg class="w-[6px] h-2 ml-[10px] text-[#555]"><use href="#chevR"/></svg>
          <button class="ml-auto mr-[2px] text-[#555]" aria-label="Previous locations"><svg class="w-[10px] h-[7px]"><use href="#chevD"/></svg></button>
          <button class="w-[18px] h-5 border-l border-[#d9d9d9] grid place-items-center" aria-label="Refresh"><svg class="size-[11px]" viewBox="0 0 11 11"><path d="M8 2.200A4.300 4.300 0 1 1 3 2" fill="none" stroke="#606060" stroke-width="1.500"/><path d="M4 0v4.500H0z" fill="#606060" transform="rotate(90 3 2.500)"/></svg></button>
        </div>
        <label class="ml-3 w-[202px] h-[22px] flex items-center border border-[#d9d9d9] px-2">
          <input type="text" aria-label="Search Quick access" placeholder="Search Quick access" class="flex-1 min-w-0 outline-none placeholder:text-[#6d6d6d]"/>
          <svg class="size-3" viewBox="0 0 12 12"><circle cx="7.500" cy="4.500" r="3.500" fill="none" stroke="#606060" stroke-width="1.500"/><path d="M5 7L.5 11.500" stroke="#606060" stroke-width="1.800"/></svg>
        </label>
      </div>

      <div class="flex-1 min-h-0 flex">
        <!-- Navigation pane -->
        <ul class="w-[139px] shrink-0 overflow-hidden whitespace-nowrap [&>li]:h-6 [&>li]:flex [&>li]:items-center">
          <li class="pl-[23px]"><svg class="w-2 h-[11px] mr-[9px] text-[#9a9a9a]"><use href="#chevR"/></svg><svg class="size-4 shrink-0 mr-[5px]"><use href="#iPictures"/></svg><a href="#">Pictures</a></li>
          <li class="pl-[40px]"><svg class="size-4 shrink-0 mr-[5px]"><use href="#iGames"/></svg><a href="#">Saved Games</a></li>
          <li class="pl-[23px]"><svg class="w-2 h-[11px] mr-[9px] text-[#9a9a9a]"><use href="#chevR"/></svg><svg class="size-4 shrink-0 mr-[5px]"><use href="#iSearch"/></svg><a href="#">Searches</a></li>
          <li class="pl-[40px]"><svg class="size-4 shrink-0 mr-[5px]"><use href="#iVideos"/></svg><a href="#">Videos</a></li>
          <li class="pl-[13px]"><svg class="w-[11px] h-2 mr-2 text-[#444]"><use href="#chevD"/></svg><svg class="size-4 shrink-0 mr-[5px]"><use href="#iPC"/></svg><a href="#">This PC</a></li>
          <li class="pl-[23px]"><svg class="w-2 h-[11px] mr-[9px] text-[#9a9a9a]"><use href="#chevR"/></svg><svg class="size-4 shrink-0 mr-[5px]"><use href="#i3D"/></svg><a href="#">3D Objects</a></li>
          <li class="pl-[23px]"><svg class="w-2 h-[11px] mr-[9px] text-[#9a9a9a]"><use href="#chevR"/></svg><svg class="size-4 shrink-0 mr-[5px]"><use href="#iDesktop"/></svg><a href="#">Desktop</a></li>
          <li class="pl-[23px]"><svg class="w-2 h-[11px] mr-[9px] text-[#9a9a9a]"><use href="#chevR"/></svg><svg class="size-4 shrink-0 mr-[5px]"><use href="#iDocs"/></svg><a href="#">Documents</a></li>
          <li class="pl-[23px]"><svg class="w-2 h-[11px] mr-[9px] text-[#9a9a9a]"><use href="#chevR"/></svg><svg class="size-4 shrink-0 mr-[5px]"><use href="#iDown"/></svg><a href="#">Downloads</a></li>
          <li class="pl-[23px]"><svg class="w-2 h-[11px] mr-[9px] text-[#9a9a9a]"><use href="#chevR"/></svg><svg class="size-4 shrink-0 mr-[5px]"><use href="#iMusic"/></svg><a href="#">Music</a></li>
          <li class="pl-[23px] bg-[#e5f3ff]"><svg class="w-2 h-[11px] mr-[9px] text-[#9a9a9a]"><use href="#chevR"/></svg><svg class="size-4 shrink-0 mr-[5px]"><use href="#iPictures"/></svg><a href="#">Pictures</a></li>
          <li class="pl-[23px]"><svg class="w-2 h-[11px] mr-[9px] text-[#9a9a9a]"><use href="#chevR"/></svg><svg class="size-4 shrink-0 mr-[5px]"><use href="#iVideos"/></svg><a href="#">Videos</a></li>
          <li class="pl-[23px]"><svg class="w-2 h-[11px] mr-[9px] text-[#9a9a9a]"><use href="#chevR"/></svg><svg class="size-4 shrink-0 mr-[5px]"><use href="#iDisk"/></svg><a href="#">Local Disk (C:)</a></li>
          <li class="pl-[15px]"><svg class="w-2 h-[11px] mr-[9px] text-[#9a9a9a]"><use href="#chevR"/></svg><svg class="size-4 shrink-0 mr-[5px]"><use href="#explorer"/></svg><a href="#">Libraries</a></li>
          <li class="pl-[15px]"><svg class="w-2 h-[11px] mr-[9px] text-[#9a9a9a]"><use href="#chevR"/></svg><svg class="size-4 shrink-0 mr-[5px]"><use href="#iNetwork"/></svg><a href="#">Network</a></li>
          <li class="pl-[13px]"><svg class="w-[11px] h-2 mr-2 text-[#444]"><use href="#chevD"/></svg><svg class="size-4 shrink-0 mr-[5px]"><use href="#iPanel"/></svg><a href="#">Control Panel</a></li>
        </ul>
        <div class="w-[17px] px-px shrink-0">
          <div class="h-full bg-[#f0f0f0] flex flex-col items-center text-[#505050]">
            <svg class="w-[9px] h-[7px] mt-[6px] shrink-0"><use href="#chevU"/></svg>
            <div class="basis-[159px] shrink"></div>
            <div class="w-full h-[119px] bg-[#cdcdcd]"></div>
            <svg class="w-[9px] h-[7px] mt-auto mb-1 shrink-0"><use href="#chevD"/></svg>
          </div>
        </div>

        <!-- Folder tiles -->
        <div class="flex-1 min-w-0 pl-[10px] pr-2 pt-[9px]">
          <h2 class="flex items-center text-[14px] leading-5 text-[#1e3287]">
            <svg class="w-3 h-2 mr-[2px] text-[#999]"><use href="#chevD"/></svg>Frequent folders (4)
            <span class="flex-1 h-px bg-[#dcdcdc] ml-2"></span>
          </h2>
          <div class="grid grid-cols-[repeat(auto-fill,228px)] auto-rows-[64px] pl-[34px] pt-[14px] leading-4">
            <a href="#" class="flex gap-1 w-max h-max">
              <svg class="size-[43px] mt-[2px]" viewBox="0 0 43 43"><use href="#folderBase" width="42" height="42"/><path d="M14.500 19.500h27v19h-27z" fill="url(#gScreen)" stroke="#0b66ba"/><path d="M34 37.500h6" stroke="#cfe9ff" stroke-dasharray="1 1"/></svg>
              <span>Desktop<br><span class="text-[#6d6d6d]">This PC</span><svg class="size-[11px] mt-px text-[#8a8f94]"><use href="#pin"/></svg></span>
            </a>
            <a href="#" class="flex gap-1 w-max h-max">
              <svg class="size-[43px] mt-[2px]" viewBox="0 0 43 43"><use href="#folderBase" width="42" height="42"/><path d="M23 15h9v12h7L27.500 39 16 27h7z" fill="#318de4" stroke="#2374c4" stroke-width=".6"/></svg>
              <span>Downloads<br><span class="text-[#6d6d6d]">This PC</span><svg class="size-[11px] mt-px text-[#8a8f94]"><use href="#pin"/></svg></span>
            </a>
            <a href="#" class="flex gap-1 w-max h-max">
              <svg class="size-[43px] mt-[2px]" viewBox="0 0 43 43"><use href="#folderBase" width="42" height="42"/><path d="M16.500 11.500h15l5 5v22h-20z" fill="#fff" stroke="#8494a2"/><path d="M31.500 11.500v5h5" fill="#e5edf3" stroke="#8494a2"/><path d="M19 20l4-7 1 7M20.500 18h3" fill="none" stroke="#2a7fd0" stroke-width="1.500"/><path d="M26 16h4M26 19h8M19 23h15M19 26.500h6M19 29.500h6M19 32.500h15M19 35.500h15" stroke="#5a9bd6"/><path d="M27 25h7v5h-7z" fill="#3a6f98"/></svg>
              <span>Documents<br><span class="text-[#6d6d6d]">This PC</span><svg class="size-[11px] mt-px text-[#8a8f94]"><use href="#pin"/></svg></span>
            </a>
            <a href="#" class="flex gap-1 w-max h-max">
              <svg class="size-[43px] mt-[2px]" viewBox="0 0 43 43"><use href="#folderBase" width="42" height="42"/><path d="M12.500 18.500h27v20h-27z" fill="#fff" stroke="#8d98a4"/><path d="M14 20h24v17H14z" fill="url(#gSky)"/><path d="M14 27c7 0 12 4 24 5v1H14z" fill="#2f5348"/></svg>
              <span>Pictures<br><span class="text-[#6d6d6d]">This PC</span><svg class="size-[11px] mt-px text-[#8a8f94]"><use href="#pin"/></svg></span>
            </a>
          </div>
        </div>
      </div>

      <footer class="h-6 shrink-0 flex items-center pl-[14px] pr-2 text-[#3c4463]">
        <span>4 items</span>
        <button class="ml-auto" aria-label="Details view"><svg class="w-[17px] h-3" viewBox="0 0 17 12"><path d="M.5.5h4v11h-4zM.5 4h4M.5 8h4" fill="none" stroke="#777"/><path d="M6 2h4M12 2h4M6 6h4M12 6h4M6 10h4M12 10h4" stroke="#777"/></svg></button>
        <button class="ml-[6px]" aria-label="Large icons view"><svg class="w-[14px] h-[14px]"><use href="#iPictures"/></svg></button>
      </footer>
    </section>

    <!-- Watermark -->
    <div class="absolute right-[49px] bottom-[8px] h-[64px] flex items-center text-white/60 font-['Roboto',sans-serif] text-[31px] leading-[64px]">
      <span>ANY</span>
      <svg class="w-[58px] h-[62px] mx-[6px]" viewBox="0 0 58 62" fill="none" stroke="currentColor" stroke-width="3.500" stroke-linejoin="round" stroke-linecap="round">
        <path d="M15 44V6q0-5 4-3l34 19q3 2 0 4l-4 2L21 12v32l32-18M8 8q-5 0-5 5v39q0 5 5 3l44-23q5-2 0-5M8 8v38l7-3M13 57q1 4 5 2l35-21q4-3 2-7"/>
      </svg>
      <span>RUN</span>
    </div>
  </main>

  <!-- Taskbar -->
  <footer class="h-10 shrink-0 flex items-stretch bg-[linear-gradient(90deg,#001823,#00121f_50%,#000a1c)] text-white">
    <button class="w-12 grid place-items-center" aria-label="Start"><svg class="size-4" viewBox="0 0 16 16"><path d="M0 2.200L7 1.200V7.500H0zM8 1.100L16 0v7.500H8zM0 8.500h7v6.300l-7-1zM8 8.500h8V16l-8-1.100z" fill="#fff"/></svg></button>
    <label class="w-[288px] bg-[#f2f2f2] border border-[#cfcfcf] text-[#333] flex items-center pl-3 pr-[6px]">
      <svg class="size-4" viewBox="0 0 16 16"><circle cx="10" cy="6" r="5" fill="none" stroke="#222" stroke-width="1.300"/><path d="M6.500 9.500L.5 15.500" stroke="#222" stroke-width="1.300"/></svg>
      <input type="text" aria-label="Type here to search" placeholder="Type here to search" class="flex-1 min-w-0 ml-[11px] text-[14px] outline-none placeholder:text-[#444]"/>
      <svg class="w-[30px] h-[38px]" viewBox="0 0 30 38"><path d="M2 7l22-4 5 28-22 5z" fill="#b4785a"/><path d="M5 9l17-3 4 24-17 3z" fill="#fdf6ef"/><path d="M8 5l2-1c1-3 5-3 5 0l4-1 .5 4-11 2z" fill="#9a97bb"/><path d="M8 15l3-2 2 2 3-3 2 2M9 20l12-2M11 27c3-6 5-3 3-1s4-1 8-1" fill="none" stroke="#6d625f" stroke-width="1.200"/></svg>
      <svg class="size-7 ml-[6px]" viewBox="0 0 28 28"><circle cx="14" cy="14" r="14" fill="#f4f4f8"/><path d="M1 10a14 14 0 0 1 26 0z" fill="#4285d8"/><path d="M1.500 19h25a14 14 0 0 1-25 0z" fill="#de3a40"/><path d="M7 6h2M13 4h2M19 6h2M10 8h2M16 8h2M8 23h2M13 25h2M18 23h2" stroke="#fff" stroke-width="1.800"/><path d="M7 13l6 6 11-9" fill="none" stroke="#1c2433" stroke-width="3.500"/></svg>
    </label>
    <button class="w-12 grid place-items-center" aria-label="Task view"><svg class="size-4" viewBox="0 0 16 16"><path d="M.5 0v2.500h9V0M.5 5.500h9v5h-9zM.5 16v-2.500h9V16M13.500 0v4M13.500 10v6" fill="none" stroke="#fff"/><path d="M12 5h3v4h-3z" fill="#fff"/></svg></button>
    <button class="w-12 ml-[3px] grid place-items-center" aria-label="Edge"><svg class="size-6"><use href="#edge"/></svg></button>
    <button class="w-12 ml-px grid place-items-center bg-[#36464f] border-b-2 border-[#76b9ed]" aria-label="File Explorer"><svg class="w-[23px] h-5"><use href="#explorer"/></svg></button>
    <button class="w-12 ml-px grid place-items-center" aria-label="Firefox"><svg class="size-6"><use href="#firefox"/></svg></button>
    <button class="w-10 mx-[5px] grid place-items-center border-b-2 border-[#76b9ed]" aria-label="Notepad"><svg class="size-6" viewBox="0 0 24 24"><path d="M7 2h13l-6 18H1z" fill="url(#gPad)"/><path d="M20 2l2 18-8 1z" fill="#b5cfd1"/></svg></button>
    <button class="w-10 ml-1 grid place-items-center border-b-2 border-[#76b9ed]" aria-label="Command Prompt"><svg class="w-[22px] h-[19px]" viewBox="0 0 22 19"><path d="M.5.5h21v18H.5z" fill="#050505" stroke="#9aa0a3"/><path d="M1 2h20" stroke="#d8dcde" stroke-width="2"/><path d="M6 5.500H3.500v3H6M8 6v.5M8 8v.5M10 5l1.500 4M13 9h5" fill="none" stroke="#ddd"/></svg></button>

    <div class="ml-auto flex items-center">
      <button class="w-6 grid place-items-center" aria-label="Show hidden icons"><svg class="w-3 h-2" viewBox="0 0 12 8"><path d="M.5 7L6 1.500 11.500 7" fill="none" stroke="#fff" stroke-width="1.200"/></svg></button>
      <button class="w-6 grid place-items-center" aria-label="Meet now"><svg class="w-3 h-4" viewBox="0 0 12 16"><path d="M2 2q4-3 7 0M2 14q4 3 7 0" fill="none" stroke="#fff"/><rect x=".5" y="4.500" width="7.500" height="7" rx="1.500" fill="none" stroke="#fff"/><path d="M8 7l3-2v6L8 9" fill="none" stroke="#fff"/></svg></button>
      <button class="w-6 grid place-items-center" aria-label="Network"><svg class="w-4 h-[14px]" viewBox="0 0 16 14"><path d="M4.500 1.500h11v8h-9M.5.5h4v4h-4zM2.500 4.500v8h9M9.500 9.500v3M6 13h7" fill="none" stroke="#fff"/></svg></button>
      <button class="w-6 grid place-items-center" aria-label="Volume"><svg class="w-4 h-[14px]" viewBox="0 0 16 14"><path d="M.5 5h2l3-3.500v11L2.500 9h-2zM7.500 4.500q2 2.500 0 5M9.800 3q3.500 4 0 8M12 1q5 6 0 12" fill="none" stroke="#fff"/></svg></button>
      <time class="w-[64px] text-center leading-[18px]">5:05 PM<br>9/17/2024</time>
      <button class="w-10 grid place-items-center" aria-label="Notifications"><svg class="size-4" viewBox="0 0 16 16"><path d="M.5 1.500h15v11h-5L8 15l-2.500-2.500h-5z" fill="none" stroke="#fff"/></svg></button>
      <button class="w-[5px] h-full ml-2 border-l border-[#5a6370]" aria-label="Show desktop"></button>
    </div>
  </footer>

</body>
</html>
